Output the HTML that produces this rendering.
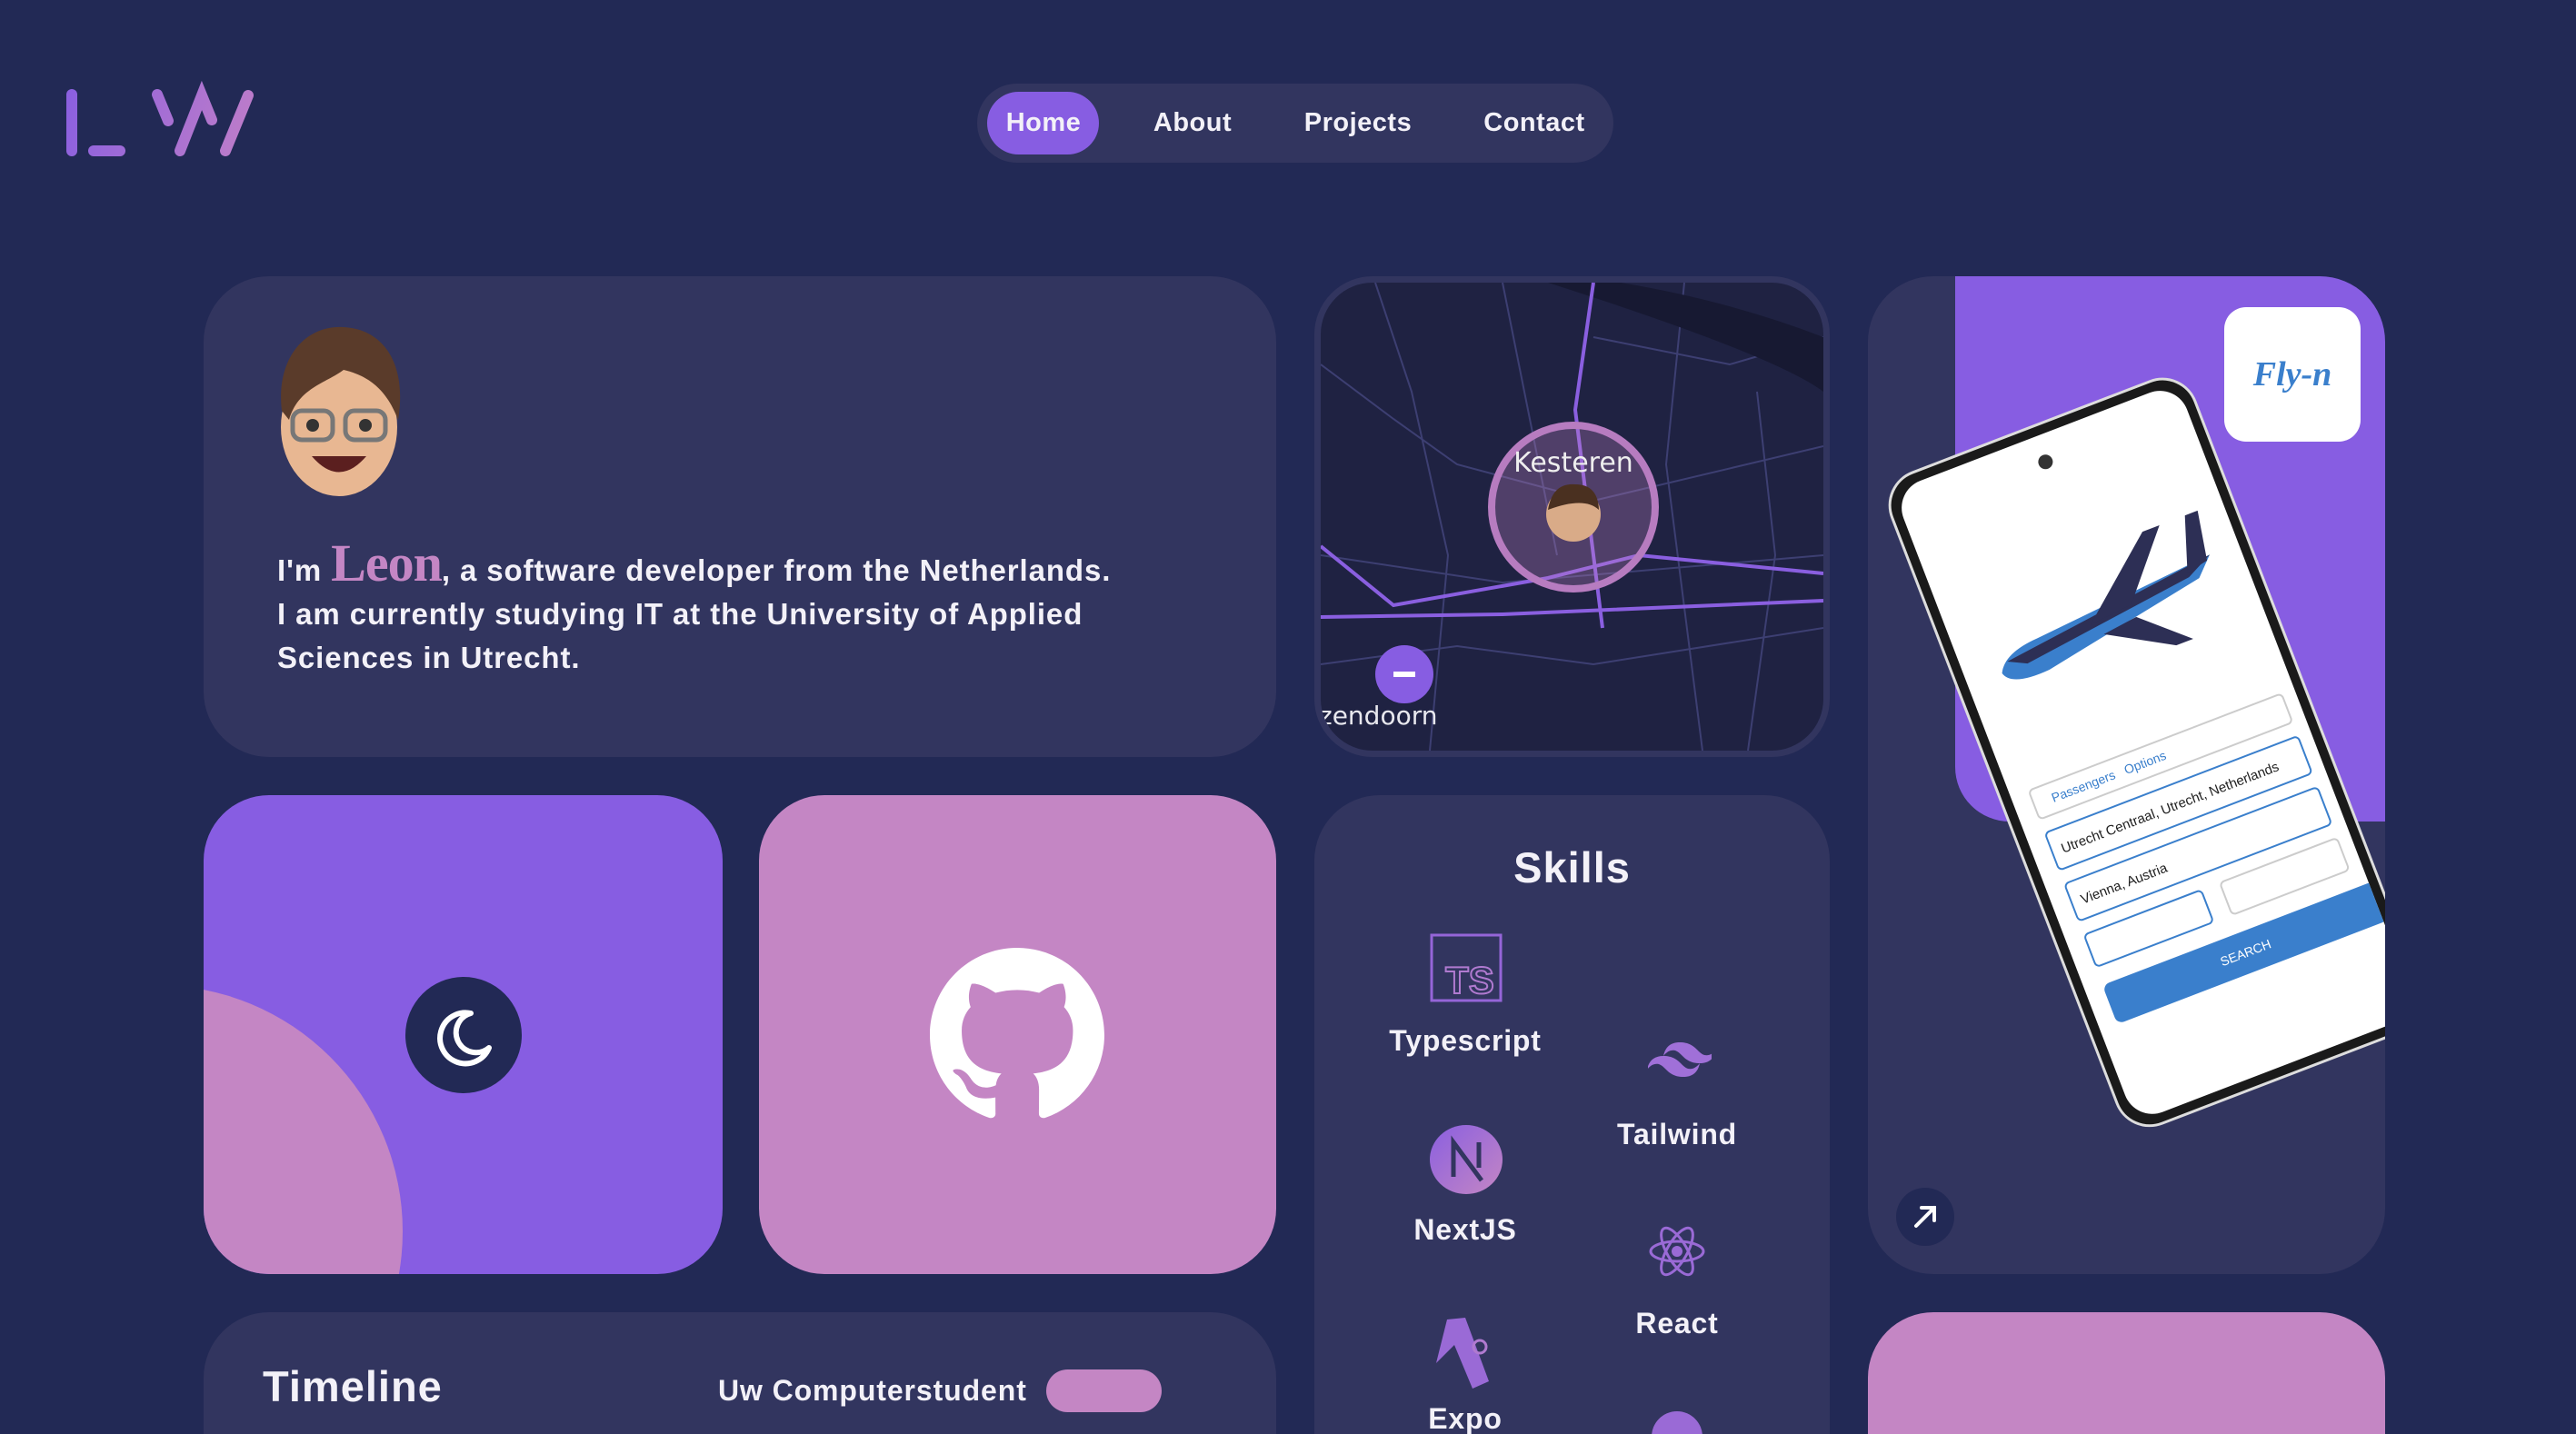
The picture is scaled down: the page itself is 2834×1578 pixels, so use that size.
<!DOCTYPE html>
<html><head><meta charset="utf-8"><style>
*{margin:0;padding:0;box-sizing:border-box}
html{width:2834px;height:1578px;overflow:hidden}
body{width:2834px;height:1578px;background:#222955;overflow:hidden;position:relative;font-family:"Liberation Sans",sans-serif;color:#f3f1f8}
.card{position:absolute;border-radius:72px;background:#32355f;overflow:hidden}
.bot{border-bottom-left-radius:0;border-bottom-right-radius:0}
.nav{position:absolute;left:1075px;top:92px;width:700px;height:87px;border-radius:44px;background:#32355f}
.nav span{position:absolute;top:0;line-height:87px;font-size:29px;font-weight:bold;transform:translateX(-50%);letter-spacing:0.5px}
.home{position:absolute;left:11px;top:9px;width:123px;height:69px;border-radius:35px;background:#875de2}
.lbl{position:absolute;font-size:32px;font-weight:bold;transform:translateX(-50%);white-space:nowrap;letter-spacing:0.8px}
</style></head><body>

<svg style="position:absolute;left:0;top:0" width="300" height="200">
<defs><linearGradient id="lg" gradientUnits="userSpaceOnUse" x1="70" y1="100" x2="280" y2="170"><stop offset="0" stop-color="#8a5fe0"/><stop offset="1" stop-color="#c07ec8"/></linearGradient></defs>
<g stroke="url(#lg)" stroke-width="12" stroke-linecap="round" fill="none">
<line x1="79" y1="104" x2="79" y2="166"/><line x1="103" y1="166" x2="132" y2="166"/>
<line x1="173" y1="104" x2="185" y2="133"/><polyline points="198,166 222,105 233,132"/>
<line x1="273" y1="105" x2="248" y2="166"/></g></svg>

<div class="nav"><div class="home"></div>
<span style="left:73px">Home</span><span style="left:237px">About</span><span style="left:419px">Projects</span><span style="left:613px">Contact</span></div>

<div class="card" style="left:224px;top:304px;width:1180px;height:529px">
<svg style="position:absolute;left:74px;top:48px" width="150" height="200">
<ellipse cx="75" cy="118" rx="64" ry="76" fill="#e8b792"/>
<path d="M12 100 C5 40 40 5 80 8 C125 10 150 50 140 110 C125 70 100 60 80 55 C60 70 30 75 20 110Z" fill="#5a3b2a"/>
<rect x="24" y="100" width="44" height="32" rx="10" fill="none" stroke="#777" stroke-width="5"/>
<rect x="82" y="100" width="44" height="32" rx="10" fill="none" stroke="#777" stroke-width="5"/>
<circle cx="46" cy="116" r="7" fill="#333"/><circle cx="104" cy="116" r="7" fill="#333"/>
<path d="M45 150 Q75 185 105 150 Z" fill="#5b1f1f"/></svg>
<div style="position:absolute;left:81px;top:292px;font-size:33px;font-weight:bold;line-height:48px;white-space:nowrap;letter-spacing:0.9px">I'm <span style="font-family:'Liberation Serif',serif;font-size:58px;color:#c486c4;letter-spacing:-1px">Leon</span>, a software developer from the Netherlands.<br>I am currently studying IT at the University of Applied<br>Sciences in Utrecht.</div>
</div>

<div class="card" style="left:1446px;top:304px;width:567px;height:529px;border-radius:64px;background:#1f2242;border:7px solid #32355f">
<svg width="553" height="515" style="position:absolute;left:0;top:0">
<g stroke="#3d3f72" stroke-width="2" fill="none">
<path d="M0 90 L80 150 L150 200 L300 240 L553 180"/><path d="M60 0 L100 120 L140 300 L120 515"/><path d="M200 0 L230 150 L260 300"/>
<path d="M0 300 L200 330 L553 300"/><path d="M400 0 L380 200 L420 515"/><path d="M0 420 L150 400 L300 420 L553 380"/>
<path d="M300 60 L450 90 L553 60"/><path d="M480 120 L500 300 L470 515"/></g>
<path d="M250 0 Q500 80 553 120 L553 60 Q450 20 330 0Z" fill="#171932"/>
<g stroke="#8a5fe0" stroke-width="4" fill="none"><path d="M0 290 L80 355 L250 325 L350 300 L553 320"/><path d="M0 368 L200 365 L553 350"/><path d="M300 0 L280 140 L310 380"/></g>
<circle cx="278" cy="247" r="90" fill="rgba(196,134,196,0.3)" stroke="#b77cc0" stroke-width="8"/>
<text x="278" y="208" text-anchor="middle" font-size="30" fill="#eee" font-family="DejaVu Sans">Kesteren</text>
<circle cx="278" cy="255" r="30" fill="#d9ab88"/><path d="M250 250 Q255 220 280 222 Q305 222 306 250 Q290 235 250 250Z" fill="#4a3020"/>
<circle cx="92" cy="431" r="32" fill="#875de2"/><rect x="80" y="428" width="24" height="6" fill="#fff"/>
<text x="-2" y="486" font-size="28" fill="#e8e8ee" font-family="DejaVu Sans">zendoorn</text></svg>
</div>

<div class="card" style="left:2055px;top:304px;width:569px;height:1098px">
<div style="position:absolute;left:96px;top:0;width:600px;height:600px;background:#875de2;border-radius:0 0 0 60px"></div>
<div style="position:absolute;left:392px;top:34px;width:150px;height:148px;background:#fff;border-radius:24px;font-family:'Liberation Serif',serif;font-style:italic;font-weight:bold;color:#3a7fcc;font-size:38px;text-align:center;line-height:148px">Fly-n</div>
<div style="position:absolute;left:11px;top:229px;width:360px;height:770px;transform-origin:0 0;transform:rotate(-21deg);background:#1a1a1a;border-radius:40px;padding:10px;border:3px solid #ddd">
<div style="width:100%;height:100%;background:#fff;border-radius:32px;position:relative;overflow:hidden">
<div style="position:absolute;left:160px;top:22px;width:16px;height:16px;border-radius:50%;background:#333"></div>
<svg style="position:absolute;left:30px;top:120px" width="290" height="160"><path d="M10 110 Q20 90 60 88 L270 70 L250 90 L60 125 Q15 128 10 110Z" fill="#3a7fcc"/><path d="M20 100 L270 70 L240 85 L40 110Z" fill="#2d2f55"/><path d="M120 95 L210 20 L230 20 L170 90Z" fill="#2d2f55"/><path d="M130 110 L200 150 L220 150 L170 105Z" fill="#2d2f55"/><path d="M240 80 L260 20 L275 20 L265 75Z" fill="#2d2f55"/></svg>
<div style="position:absolute;left:20px;top:360px;width:300px;height:36px;border:2px solid #ccc;border-radius:6px;font-size:14px;color:#3a7fcc;padding:8px 20px">Passengers &nbsp; Options</div>
<div style="position:absolute;left:20px;top:410px;width:300px;height:46px;border:2px solid #3a7fcc;border-radius:6px;font-size:15px;color:#222;padding:14px 10px">Utrecht Centraal, Utrecht, Netherlands</div>
<div style="position:absolute;left:20px;top:470px;width:300px;height:46px;border:2px solid #3a7fcc;border-radius:6px;font-size:15px;color:#222;padding:14px 10px">Vienna, Austria</div>
<div style="position:absolute;left:20px;top:530px;width:140px;height:40px;border:2px solid #3a7fcc;border-radius:6px"></div>
<div style="position:absolute;left:180px;top:530px;width:140px;height:40px;border:2px solid #ccc;border-radius:6px"></div>
<div style="position:absolute;left:20px;top:590px;width:320px;height:46px;background:#3a7fcc;border-radius:8px;color:#fff;font-size:14px;text-align:center;line-height:46px">SEARCH</div>
</div></div>
<div style="position:absolute;left:31px;top:1003px;width:64px;height:64px;border-radius:50%;background:#222955"><svg width="64" height="64"><path d="M22 42 L42 22 M28 22 L42 22 L42 36" stroke="#fff" stroke-width="4" fill="none" stroke-linecap="round"/></svg></div>
</div>

<div class="card" style="left:224px;top:875px;width:571px;height:527px;background:#875de2">
<div style="position:absolute;left:-323px;top:209px;width:542px;height:542px;border-radius:50%;background:#c486c4"></div>
<div style="position:absolute;left:222px;top:200px;width:128px;height:128px;border-radius:50%;background:#222955"><svg width="128" height="128"><path d="M72 40 A28 28 0 1 0 92 78 A22 22 0 1 1 72 40Z" fill="none" stroke="#fff" stroke-width="6" stroke-linejoin="round"/></svg></div>
</div>

<div class="card" style="left:835px;top:875px;width:569px;height:527px;background:#c486c4">
<svg style="position:absolute;left:188px;top:168px" width="192" height="192" viewBox="0 0 16 16"><path fill="#fff" d="M8 0C3.58 0 0 3.58 0 8c0 3.54 2.29 6.53 5.47 7.59.4.07.55-.17.55-.38 0-.19-.01-.82-.01-1.49-2.01.37-2.53-.49-2.69-.94-.09-.23-.48-.94-.82-1.13-.28-.15-.68-.52-.01-.53.63-.01 1.08.58 1.23.82.72 1.21 1.87.87 2.33.66.07-.52.28-.87.51-1.07-1.78-.2-3.64-.89-3.64-3.95 0-.87.31-1.59.82-2.15-.08-.2-.36-1.02.08-2.12 0 0 .67-.21 2.2.82.64-.18 1.32-.27 2-.27.68 0 1.36.09 2 .27 1.53-1.04 2.2-.82 2.2-.82.44 1.1.16 1.92.08 2.12.51.56.82 1.27.82 2.15 0 3.07-1.87 3.75-3.65 3.95.29.25.54.73.54 1.48 0 1.07-.01 1.93-.01 2.2 0 .21.15.46.55.38A8.013 8.013 0 0016 8c0-4.42-3.58-8-8-8z"/></svg>
</div>

<div class="card bot" style="left:1446px;top:875px;width:567px;height:703px">
<div style="position:absolute;left:0;width:100%;top:52px;text-align:center;font-size:47px;font-weight:bold;letter-spacing:1px">Skills</div>
<svg style="position:absolute;left:127px;top:152px" width="80" height="76"><rect x="2" y="2" width="76" height="72" fill="none" stroke="#9565d8" stroke-width="3"/><text x="44" y="66" text-anchor="middle" font-size="42" font-weight="bold" fill="none" stroke="#b07ad0" stroke-width="2" font-family="Liberation Sans">TS</text></svg>
<div class="lbl" style="left:166px;top:252px">Typescript</div>
<svg style="position:absolute;left:367px;top:270px" width="70" height="42"><path d="M35 2C25 2 19 7 17 17 21 12 25 10 30 11 33 12 35 14 38 17 42 21 47 25 57 25 67 25 73 20 75 10 71 15 67 17 62 16 59 15 57 13 54 10 50 6 45 2 35 2ZM17 17C7 17 1 22-1 32 3 27 7 25 12 26 15 27 17 29 20 32 24 36 29 40 39 40 49 40 55 35 57 25 53 30 49 32 44 31 41 30 39 28 36 25 32 21 27 17 17 17Z" fill="#a070d8"/></svg>
<div class="lbl" style="left:399px;top:355px">Tailwind</div>
<svg style="position:absolute;left:126px;top:362px" width="82" height="78"><defs><linearGradient id="g2" x1="0" y1="0" x2="1" y2="1"><stop offset="0" stop-color="#8a5fe0"/><stop offset="1" stop-color="#c486c4"/></linearGradient></defs><ellipse cx="41" cy="39" rx="40" ry="38" fill="url(#g2)"/><path d="M27 58 V20 L58 62 M55 20 V48" stroke="#32355f" stroke-width="5" fill="none"/></svg>
<div class="lbl" style="left:166px;top:460px">NextJS</div>
<svg style="position:absolute;left:368px;top:470px" width="62" height="64" viewBox="-31 -32 62 64"><g fill="none" stroke="#9a6ad6" stroke-width="3"><ellipse rx="29" ry="11"/><ellipse rx="29" ry="11" transform="rotate(60)"/><ellipse rx="29" ry="11" transform="rotate(120)"/></g><circle r="6" fill="#9a6ad6"/></svg>
<div class="lbl" style="left:399px;top:563px">React</div>
<svg style="position:absolute;left:124px;top:575px" width="80" height="80"><path d="M22 2 L42 0 L68 70 L50 78 L30 30 L10 50 Z" fill="#9a6ad6"/><circle cx="58" cy="32" r="7" fill="none" stroke="#b07ad0" stroke-width="3"/></svg>
<div class="lbl" style="left:166px;top:668px">Expo</div>
<div style="position:absolute;left:371px;top:678px;width:56px;height:56px;border-radius:50%;background:#9a6ad6"></div>
</div>

<div class="card bot" style="left:224px;top:1444px;width:1180px;height:134px">
<div style="position:absolute;left:65px;top:54px;font-size:47px;font-weight:bold;letter-spacing:1px">Timeline</div>
<div style="position:absolute;left:566px;top:68px;font-size:32px;font-weight:bold;letter-spacing:0.9px">Uw Computerstudent</div>
<div style="position:absolute;left:927px;top:63px;width:127px;height:47px;border-radius:24px;background:#c486c4"></div>
</div>

<div class="card bot" style="left:2055px;top:1444px;width:569px;height:134px;background:#c486c4"></div>
</body></html>
